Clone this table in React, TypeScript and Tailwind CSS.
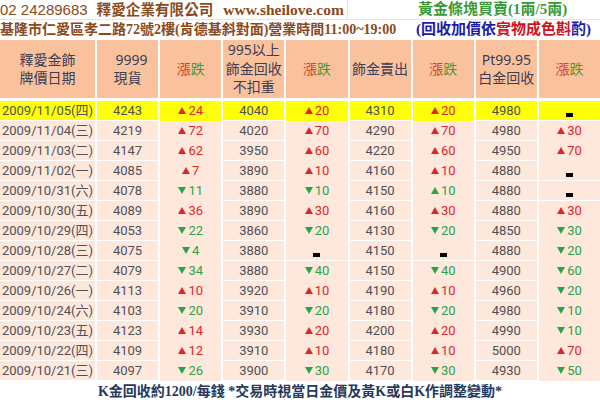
import React from 'react';

type Chg = number | null;

interface Row {
  date: string;
  pure: string;
  c1: Chg;
  recycle: string;
  c2: Chg;
  sell: string;
  c3: Chg;
  pt: string;
  c4: Chg;
  // some cells show a green "up" triangle in the source
  greenUp?: number[];
  hl?: boolean;
}

const rows: Row[] = [
  { date: '2009/11/05(四)', pure: '4243', c1: 24, recycle: '4040', c2: 20, sell: '4310', c3: 20, pt: '4980', c4: null, hl: true },
  { date: '2009/11/04(三)', pure: '4219', c1: 72, recycle: '4020', c2: 70, sell: '4290', c3: 70, pt: '4980', c4: 30 },
  { date: '2009/11/03(二)', pure: '4147', c1: 62, recycle: '3950', c2: 60, sell: '4220', c3: 60, pt: '4950', c4: 70 },
  { date: '2009/11/02(一)', pure: '4085', c1: 7, recycle: '3890', c2: 10, sell: '4160', c3: 10, pt: '4880', c4: null },
  { date: '2009/10/31(六)', pure: '4078', c1: -11, recycle: '3880', c2: -10, sell: '4150', c3: 10, pt: '4880', c4: null, greenUp: [3] },
  { date: '2009/10/30(五)', pure: '4089', c1: 36, recycle: '3890', c2: 30, sell: '4160', c3: 30, pt: '4880', c4: 30 },
  { date: '2009/10/29(四)', pure: '4053', c1: -22, recycle: '3860', c2: -20, sell: '4130', c3: -20, pt: '4850', c4: -30 },
  { date: '2009/10/28(三)', pure: '4075', c1: -4, recycle: '3880', c2: null, sell: '4150', c3: null, pt: '4880', c4: -20 },
  { date: '2009/10/27(二)', pure: '4079', c1: -34, recycle: '3880', c2: -40, sell: '4150', c3: -40, pt: '4900', c4: -60 },
  { date: '2009/10/26(一)', pure: '4113', c1: 10, recycle: '3920', c2: 10, sell: '4190', c3: 10, pt: '4960', c4: -20 },
  { date: '2009/10/24(六)', pure: '4103', c1: -20, recycle: '3910', c2: -20, sell: '4180', c3: -20, pt: '4980', c4: -10 },
  { date: '2009/10/23(五)', pure: '4123', c1: 14, recycle: '3930', c2: 20, sell: '4200', c3: 20, pt: '4990', c4: -10 },
  { date: '2009/10/22(四)', pure: '4109', c1: 12, recycle: '3910', c2: 10, sell: '4180', c3: 10, pt: '5000', c4: 70 },
  { date: '2009/10/21(三)', pure: '4097', c1: -26, recycle: '3900', c2: -30, sell: '4170', c3: -30, pt: '4930', c4: -50 },
];

function Tri({ up, color }: { up: boolean; color: string }) {
  return (
    <svg width="8" height="7" viewBox="0 0 8 7" className="mr-[2px] shrink-0">
      <polygon points={up ? '4,0 8,7 0,7' : '0,0 8,0 4,7'} fill={color} />
    </svg>
  );
}

function ChangeCell({ value, greenUp, bg }: { value: Chg; greenUp?: boolean; bg: string }) {
  if (value === null) {
    return (
      <div className={`${bg} flex items-center justify-center`}>
        <span className="inline-block w-[7px] h-[4px] bg-black translate-y-[4px]" />
      </div>
    );
  }
  const up = value > 0;
  const color = up && !greenUp ? '#e0262b' : '#2aa34a';
  return (
    <div className={`${bg} flex items-center justify-center`}>
      <Tri up={up} color={color} />
      <span style={{ color }}>{Math.abs(value)}</span>
    </div>
  );
}

function ZhangDie() {
  return (
    <span>
      <span className="text-[#d8402c]">漲</span>
      <span className="text-[#4c9a2a]">跌</span>
    </span>
  );
}

export default function App() {
  const hdr = 'bg-[#f9c29d] flex flex-col items-center justify-center leading-[18.5px]';
  const chg = "text-[13px] [font-family:'Roboto',sans-serif] h-[19px] grid";
  return (
    <div className="w-[600px] h-[402px] bg-white overflow-hidden">
      {/* Top info */}
      <div className="font-bold text-[14px] leading-[19px] [font-family:'Liberation_Serif','Noto_Sans_CJK_TC',serif]">
        <div className="flex h-[20px] border-b border-[#e4e4e4]">
          <div className="w-[348px] border-r border-[#e4e4e4] text-[#8a4a1c] whitespace-nowrap">
            <span className="font-normal [font-family:'Liberation_Sans',sans-serif] text-[15px]">02 24289683</span>
            <span className="ml-[9px] text-[14.6px]">釋愛企業有限公司</span>
            <span className="ml-[10px] text-[15.5px]">www.sheilove.com</span>
          </div>
          <div className="flex-1 pl-[70px] text-[15px] text-[#3a9a3a] whitespace-nowrap">黃金條塊買賣(1兩/5兩)</div>
        </div>
        <div className="flex h-[20px] whitespace-nowrap">
          <span className="text-[#8a4a1c] w-[416px]">基隆市仁愛區孝二路72號2樓(肯德基斜對面)營業時間11:00~19:00</span>
          <span className="text-[15px] text-[#1c1ca8]">(回收加價依</span>
          <span className="text-[15px] text-[#d0141c]">實物成色斟</span>
          <span className="text-[15px] text-[#1c1ca8]">酌)</span>
        </div>
      </div>

      {/* Price table */}
      <div className="grid grid-cols-[95px_repeat(8,minmax(0,1fr))] gap-x-[2px] gap-y-[1px] bg-white text-[14px] text-[#3e3e56] [font-family:'Noto_Sans','Noto_Sans_CJK_TC',sans-serif]">
        <div className={`${hdr} h-[58px]`}>
          <span>釋愛金飾</span>
          <span>牌價日期</span>
        </div>
        <div className={hdr}>
          <span className="pl-[8px]">9999</span>
          <span>現貨</span>
        </div>
        <div className={hdr}><ZhangDie /></div>
        <div className={hdr}>
          <span>995以上</span>
          <span>飾金回收</span>
          <span>不扣重</span>
        </div>
        <div className={hdr}><ZhangDie /></div>
        <div className={hdr}>飾金賣出</div>
        <div className={hdr}><ZhangDie /></div>
        <div className={hdr}>
          <span>Pt99.95</span>
          <span>白金回收</span>
        </div>
        <div className={hdr}><ZhangDie /></div>

        <div className="col-span-9 h-px" />

        {rows.map((r) => {
          const bg = r.hl ? 'bg-[#ffff0a]' : 'bg-[#fde8db]';
          const cell = `${bg} h-[19px] flex items-center justify-center text-[#505058] text-[13px]`;
          return (
            <React.Fragment key={r.date}>
              <div className={`${cell} [font-family:'Roboto','Noto_Sans_CJK_TC',sans-serif]`}>{r.date}</div>
              <div className={`${cell} [font-family:'Roboto',sans-serif]`}>{r.pure}</div>
              <div className={chg}><ChangeCell value={r.c1} bg={bg} /></div>
              <div className={`${cell} [font-family:'Roboto',sans-serif]`}>{r.recycle}</div>
              <div className={chg}><ChangeCell value={r.c2} bg={bg} /></div>
              <div className={`${cell} [font-family:'Roboto',sans-serif]`}>{r.sell}</div>
              <div className={chg}><ChangeCell value={r.c3} bg={bg} greenUp={r.greenUp?.includes(3)} /></div>
              <div className={`${cell} [font-family:'Roboto',sans-serif]`}>{r.pt}</div>
              <div className={chg}><ChangeCell value={r.c4} bg={bg} /></div>
            </React.Fragment>
          );
        })}
      </div>

      {/* Footer note */}
      <div className="text-center font-bold text-[14px] leading-[20px] mt-[2px] text-[#26385c] [font-family:'Liberation_Serif','Noto_Sans_CJK_TC',serif]">
        K金回收約1200/每錢 *交易時視當日金價及黃K或白K作調整變動*
      </div>
    </div>
  );
}
